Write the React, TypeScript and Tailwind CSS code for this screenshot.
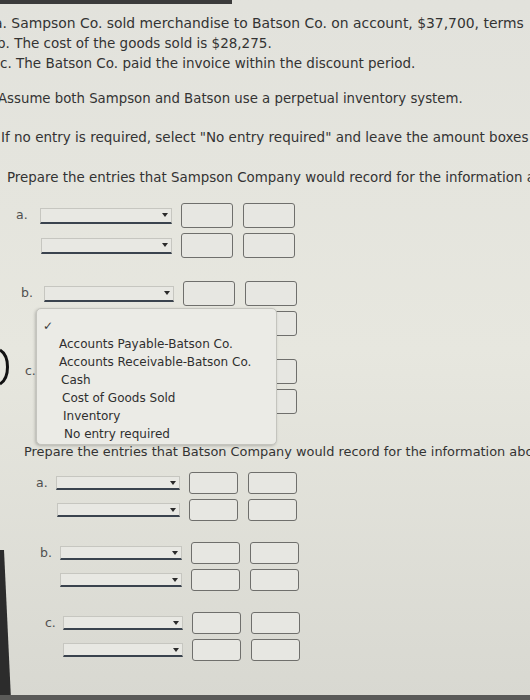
import React from "react";

const accounts = [
  "Accounts Payable-Batson Co.",
  "Accounts Receivable-Batson Co.",
  "Cash",
  "Cost of Goods Sold",
  "Inventory",
  "No entry required",
];

// small shift per item, the photo is taken at an angle
const itemPad = ["pl-0", "pl-0", "pl-[2px]", "pl-[3px]", "pl-[4px]", "pl-[5px]"];

function Select({ className }: { className: string }) {
  return (
    <div
      className={`relative shrink-0 border-x border-t border-[#c6c6c0] border-b-2 border-b-[#3a434e] bg-[#e8e8e3] ${className}`}
    >
      <span className="absolute right-[3px] top-1/2 -translate-y-1/2 border-x-[3.5px] border-t-[4px] border-x-transparent border-t-[#2a2a2a]" />
    </div>
  );
}

function Box({ className }: { className: string }) {
  return (
    <div
      className={`shrink-0 rounded-[3px] border-[1.5px] border-[#6f6f6c] bg-[#e7e7e2] ${className}`}
    />
  );
}

interface LineProps {
  label?: string;
  pad: string;
  labelW: string;
  sel: string;
  box: string;
}

function Line({ label, pad, labelW, sel, box }: LineProps) {
  return (
    <div className={`flex items-center ${pad}`}>
      <div className={`shrink-0 text-[12.5px] text-[#505050] ${labelW}`}>{label}</div>
      <Select className={sel} />
      <div className="ml-[9px] flex gap-[10px]">
        <Box className={box} />
        <Box className={box} />
      </div>
    </div>
  );
}

export default function App() {
  const sBox = "h-[25px] w-[52px]";
  const bBox = "h-[22px] w-[49px]";

  return (
    <div className="relative h-[700px] w-[530px] overflow-hidden bg-linear-to-b from-[#e2e2dc] via-[#e7e7df] to-[#d8d8d1] font-['DejaVu_Sans',sans-serif] text-[#333333]">
      {/* screen bezel at the top */}
      <div className="h-[4px] w-[232px] bg-[#3b3b3b]" />

      {/* problem text */}
      <div className="mt-[9px] whitespace-nowrap text-[13.5px] leading-[20px]">
        <p className="-ml-[6px] text-[13.9px]">a. Sampson Co. sold merchandise to Batson Co. on account, $37,700, terms</p>
        <p className="-ml-[3px]">b. The cost of the goods sold is $28,275.</p>
        <p className="ml-0">c. The Batson Co. paid the invoice within the discount period.</p>
        <p className="-ml-[2px] mt-[16px] text-[13.3px]">Assume both Sampson and Batson use a perpetual inventory system.</p>
        <p className="ml-[1px] mt-[18px]">If no entry is required, select "No entry required" and leave the amount boxes blank.</p>
        <p className="ml-[7px] mt-[21px] text-[13.4px]">Prepare the entries that Sampson Company would record for the information above.</p>
      </div>

      {/* Sampson entries */}
      <div className="mt-[15px] flex flex-col">
        <div className="flex flex-col gap-[5px]">
          <Line label="a." pad="pl-[16px]" labelW="w-[24px]" sel="h-[16px] w-[132px]" box={sBox} />
          <Line pad="pl-[16px]" labelW="w-[25px]" sel="h-[16px] w-[131px]" box={sBox} />
        </div>
        <div className="mt-[23px] flex flex-col gap-[5px]">
          <Line label="b." pad="pl-[21px]" labelW="w-[23px]" sel="h-[16px] w-[130px]" box={sBox} />
          <Line pad="pl-[21px]" labelW="w-[23px]" sel="h-[16px] w-[130px]" box={sBox} />
        </div>
        <div className="mt-[23px] flex flex-col gap-[5px]">
          <Line label="c." pad="pl-[25px]" labelW="w-[25px]" sel="h-[16px] w-[124px]" box={sBox} />
          <Line pad="pl-[25px]" labelW="w-[25px]" sel="h-[16px] w-[124px]" box={sBox} />
        </div>
      </div>

      <p className="ml-[24px] mt-[28px] whitespace-nowrap text-[12.9px] leading-[20px]">
        Prepare the entries that Batson Company would record for the information above.
      </p>

      {/* Batson entries */}
      <div className="mt-[10px] flex flex-col">
        <div className="flex flex-col gap-[5px]">
          <Line label="a." pad="pl-[36px]" labelW="w-[20px]" sel="h-[14px] w-[124px]" box={bBox} />
          <Line pad="pl-[36px]" labelW="w-[21px]" sel="h-[14px] w-[123px]" box={bBox} />
        </div>
        <div className="mt-[21px] flex flex-col gap-[5px]">
          <Line label="b." pad="pl-[40px]" labelW="w-[20px]" sel="h-[14px] w-[122px]" box={bBox} />
          <Line pad="pl-[40px]" labelW="w-[20px]" sel="h-[14px] w-[122px]" box={bBox} />
        </div>
        <div className="mt-[21px] flex flex-col gap-[5px]">
          <Line label="c." pad="pl-[45px]" labelW="w-[18px]" sel="h-[14px] w-[120px]" box={bBox} />
          <Line pad="pl-[45px]" labelW="w-[18px]" sel="h-[14px] w-[120px]" box={bBox} />
        </div>
      </div>

      {/* open select menu */}
      <div className="absolute left-[36px] top-[308px] h-[137px] w-[241px] rounded-[5px] border border-[#c4c4be] bg-[#ebebe6] pt-[8px] shadow-[-1px_1px_3px_rgba(0,0,0,0.22)]">
        <div className="flex h-[18px] items-center pl-[6px] text-[12px] text-[#3a3a3a]">✓</div>
        <ul className="pl-[22px] text-[12px] leading-[18px] text-[#2f2f2f]">
          {accounts.map((a, i) => (
            <li key={a} className={itemPad[i]}>
              {a}
            </li>
          ))}
        </ul>
      </div>

      {/* edge of a round control cut off at the left */}
      <svg className="absolute left-0 top-[348px]" width="12" height="38" viewBox="0 0 12 38">
        <path d="M0 2 C 10 8, 10 30, 0 36" fill="none" stroke="#111" strokeWidth="3" />
      </svg>

      {/* photo edges: bezel on the left and bottom */}
      <svg className="absolute bottom-0 left-0" width="14" height="150" viewBox="0 0 14 150">
        <polygon points="0,0 4,0 11,150 0,150" fill="#2c2c2c" />
      </svg>
      <div className="absolute bottom-0 left-0 h-[5px] w-full bg-[#5a5a58]" />
    </div>
  );
}
